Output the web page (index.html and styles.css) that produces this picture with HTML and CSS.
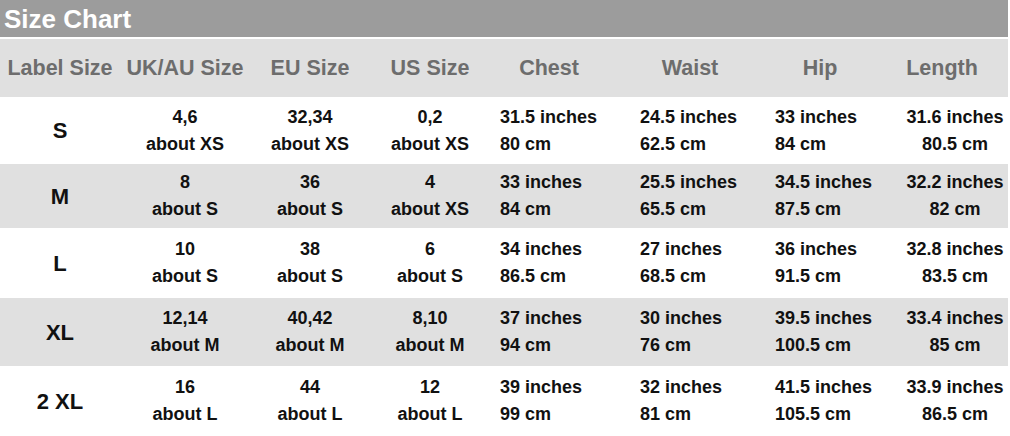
FILE: index.html
```html
<!DOCTYPE html>
<html>
<head>
<meta charset="utf-8">
<link rel="stylesheet" href="styles.css">
</head>
<body>
<div class="chart">
  <div class="title">Size Chart</div>
  <div class="row head">
    <div class="c">Label Size</div>
    <div class="c">UK/AU Size</div>
    <div class="c">EU Size</div>
    <div class="c">US Size</div>
    <div class="c h-chest">Chest</div>
    <div class="c h-waist">Waist</div>
    <div class="c h-hip">Hip</div>
    <div class="c h-len">Length</div>
  </div>

  <div class="row data r-s">
    <div class="c lab">S</div>
    <div class="c">4,6<br>about XS</div>
    <div class="c">32,34<br>about XS</div>
    <div class="c">0,2<br>about XS</div>
    <div class="l">31.5 inches<br>80 cm</div>
    <div class="l">24.5 inches<br>62.5 cm</div>
    <div class="l">33 inches<br>84 cm</div>
    <div class="c d-len">31.6 inches<br>80.5 cm</div>
  </div>

  <div class="row data alt r-m">
    <div class="c lab">M</div>
    <div class="c">8<br>about S</div>
    <div class="c">36<br>about S</div>
    <div class="c">4<br>about XS</div>
    <div class="l">33 inches<br>84 cm</div>
    <div class="l">25.5 inches<br>65.5 cm</div>
    <div class="l">34.5 inches<br>87.5 cm</div>
    <div class="c d-len">32.2 inches<br>82 cm</div>
  </div>

  <div class="row data r-l">
    <div class="c lab">L</div>
    <div class="c">10<br>about S</div>
    <div class="c">38<br>about S</div>
    <div class="c">6<br>about S</div>
    <div class="l">34 inches<br>86.5 cm</div>
    <div class="l">27 inches<br>68.5 cm</div>
    <div class="l">36 inches<br>91.5 cm</div>
    <div class="c d-len">32.8 inches<br>83.5 cm</div>
  </div>

  <div class="row data alt r-xl">
    <div class="c lab">XL</div>
    <div class="c">12,14<br>about M</div>
    <div class="c">40,42<br>about M</div>
    <div class="c">8,10<br>about M</div>
    <div class="l">37 inches<br>94 cm</div>
    <div class="l">30 inches<br>76 cm</div>
    <div class="l">39.5 inches<br>100.5 cm</div>
    <div class="c d-len">33.4 inches<br>85 cm</div>
  </div>

  <div class="row data r-2xl">
    <div class="c lab">2 XL</div>
    <div class="c">16<br>about L</div>
    <div class="c">44<br>about L</div>
    <div class="c">12<br>about L</div>
    <div class="l">39 inches<br>99 cm</div>
    <div class="l">32 inches<br>81 cm</div>
    <div class="l">41.5 inches<br>105.5 cm</div>
    <div class="c d-len">33.9 inches<br>86.5 cm</div>
  </div>
</div>
</body>
</html>
```

FILE: styles.css
```css
html, body {
  margin: 0;
  padding: 0;
  background: #ffffff;
}
body {
  width: 1010px;
  height: 436px;
  overflow: hidden;
  font-family: "Liberation Sans", Arial, sans-serif;
  font-weight: bold;
}
.chart {
  width: 1008px;
  display: flex;
  flex-direction: column;
}
.title {
  height: 37px;
  background: #9c9c9c;
  color: #ffffff;
  font-size: 26px;
  line-height: 39px;
  padding-left: 4px;
  margin-bottom: 2px;
}
.row {
  display: grid;
  grid-template-columns: 120px 130px 120px 120px 140px 135px 125px 118px;
  align-items: center;
}
.head {
  height: 58px;
  background: #e0e0e0;
  color: #6d6d6d;
  font-size: 21.5px;
}
.c {
  text-align: center;
}
.l {
  text-align: left;
  padding-left: 10px;
}
.h-chest { padding-right: 22px; }
.h-waist { padding-right: 15px; }
.h-hip { padding-right: 15px; }
.h-len { padding-right: 14px; }
.d-len { padding-left: 12px; }
.data {
  font-size: 18px;
  line-height: 27px;
  color: #111111;
}
.alt {
  background: #e0e0e0;
}
.lab {
  font-size: 22px;
}
.r-s { height: 67px; }
.r-m { height: 64px; }
.r-l { height: 70px; }
.r-xl { height: 68px; }
.r-2xl { height: 70px; }
```
